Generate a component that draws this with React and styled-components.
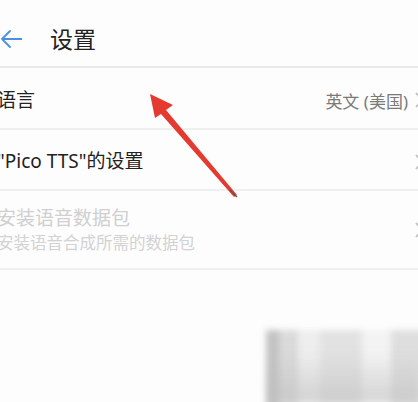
import React from "react";
import styled, { createGlobalStyle } from "styled-components";

const GlobalStyle = createGlobalStyle`
  html, body {
    margin: 0;
    padding: 0;
    background: #fdfdfd;
  }
  body {
    font-family: "Noto Sans", "Noto Sans CJK SC", sans-serif;
    overflow: hidden;
  }
`;

const Screen = styled.div`
  position: relative;
  width: 418px;
  height: 402px;
  overflow: hidden;
  background: #fdfdfd;
`;

const Header = styled.header`
  height: 54px;
  padding-top: 12px;
  display: flex;
  align-items: center;
  gap: 28px;
  border-bottom: 2px solid #e9e9e9;
`;

const Title = styled.h1`
  margin: 0;
  font-size: 23px;
  font-weight: 400;
  color: #222;
  line-height: 1;
`;

const List = styled.div`
  display: flex;
  flex-direction: column;
`;

const Row = styled.div`
  box-sizing: border-box;
  height: ${(p) => p.$h}px;
  padding-top: ${(p) => p.$pt || 0}px;
  display: flex;
  align-items: center;
  justify-content: space-between;
  border-bottom: 2px solid #efefef;
  margin-left: -3px;
  margin-right: -6px;
`;

const Texts = styled.div`
  display: flex;
  flex-direction: column;
  gap: 3px;
`;

const Label = styled.span`
  font-size: 19px;
  color: ${(p) => (p.$disabled ? "#cfcfcf" : "#222")};
  line-height: 1.2;
`;

const Sub = styled.span`
  font-size: 16.5px;
  color: #d2d2d2;
  line-height: 1.2;
`;

const Side = styled.div`
  display: flex;
  align-items: center;
  gap: 6px;
`;

const Value = styled.span`
  font-size: 17px;
  color: #7a7a7a;
`;

const Chevron = () => (
  <svg width="10" height="16" viewBox="0 0 10 16">
    <path d="M2 1 L8 8 L2 15" fill="none" stroke="#bdbdbd" strokeWidth="1.6" />
  </svg>
);

const BackArrow = () => (
  <svg width="22" height="20" viewBox="0 0 22 20">
    <path
      d="M22 10 H2 M10 2 L2 10 L10 18"
      fill="none"
      stroke="#4a8fe3"
      strokeWidth="1.8"
      strokeLinecap="round"
      strokeLinejoin="round"
    />
  </svg>
);

const Pointer = styled.svg`
  position: absolute;
  left: 140px;
  top: 87px;
  pointer-events: none;
`;

const Watermark = styled.div`
  position: absolute;
  left: 266px;
  top: 330px;
  width: 160px;
  height: 80px;
  background:
    linear-gradient(90deg, #b9b9b9 0 8%, #d4d4d4 8% 20%, #ececec 20% 34%, #dedede 34% 60%, #f2f2f2 60% 78%, #d9d9d9 78% 100%);
  filter: blur(3px);
  opacity: 0.85;
`;

const WatermarkShade = styled.div`
  position: absolute;
  left: 270px;
  top: 352px;
  width: 150px;
  height: 50px;
  background: linear-gradient(180deg, rgba(200,200,200,0) 0%, rgba(190,190,190,0.6) 100%);
  filter: blur(4px);
`;

export default function App() {
  return (
    <>
      <GlobalStyle />
      <Screen>
        <Header>
          <BackArrow />
          <Title>设置</Title>
        </Header>
        <List>
          <Row $h={62} $pt={4}>
            <Label>语言</Label>
            <Side>
              <Value>英文 (美国)</Value>
              <Chevron />
            </Side>
          </Row>
          <Row $h={61} $pt={4}>
            <Label>"Pico TTS"的设置</Label>
            <Chevron />
          </Row>
          <Row $h={79}>
            <Texts>
              <Label $disabled>安装语音数据包</Label>
              <Sub>安装语音合成所需的数据包</Sub>
            </Texts>
            <Chevron />
          </Row>
        </List>

        <Pointer width="110" height="115" viewBox="0 0 110 115">
          <path d="M10 7 L33 18 L26 23 L97 108 L94 110 L21 27 L15 31 Z" fill="#e53a2f" />
          <path d="M90 103 L97 110" stroke="#6b5050" strokeWidth="1.4" />
        </Pointer>

        <Watermark />
        <WatermarkShade />
      </Screen>
    </>
  );
}
